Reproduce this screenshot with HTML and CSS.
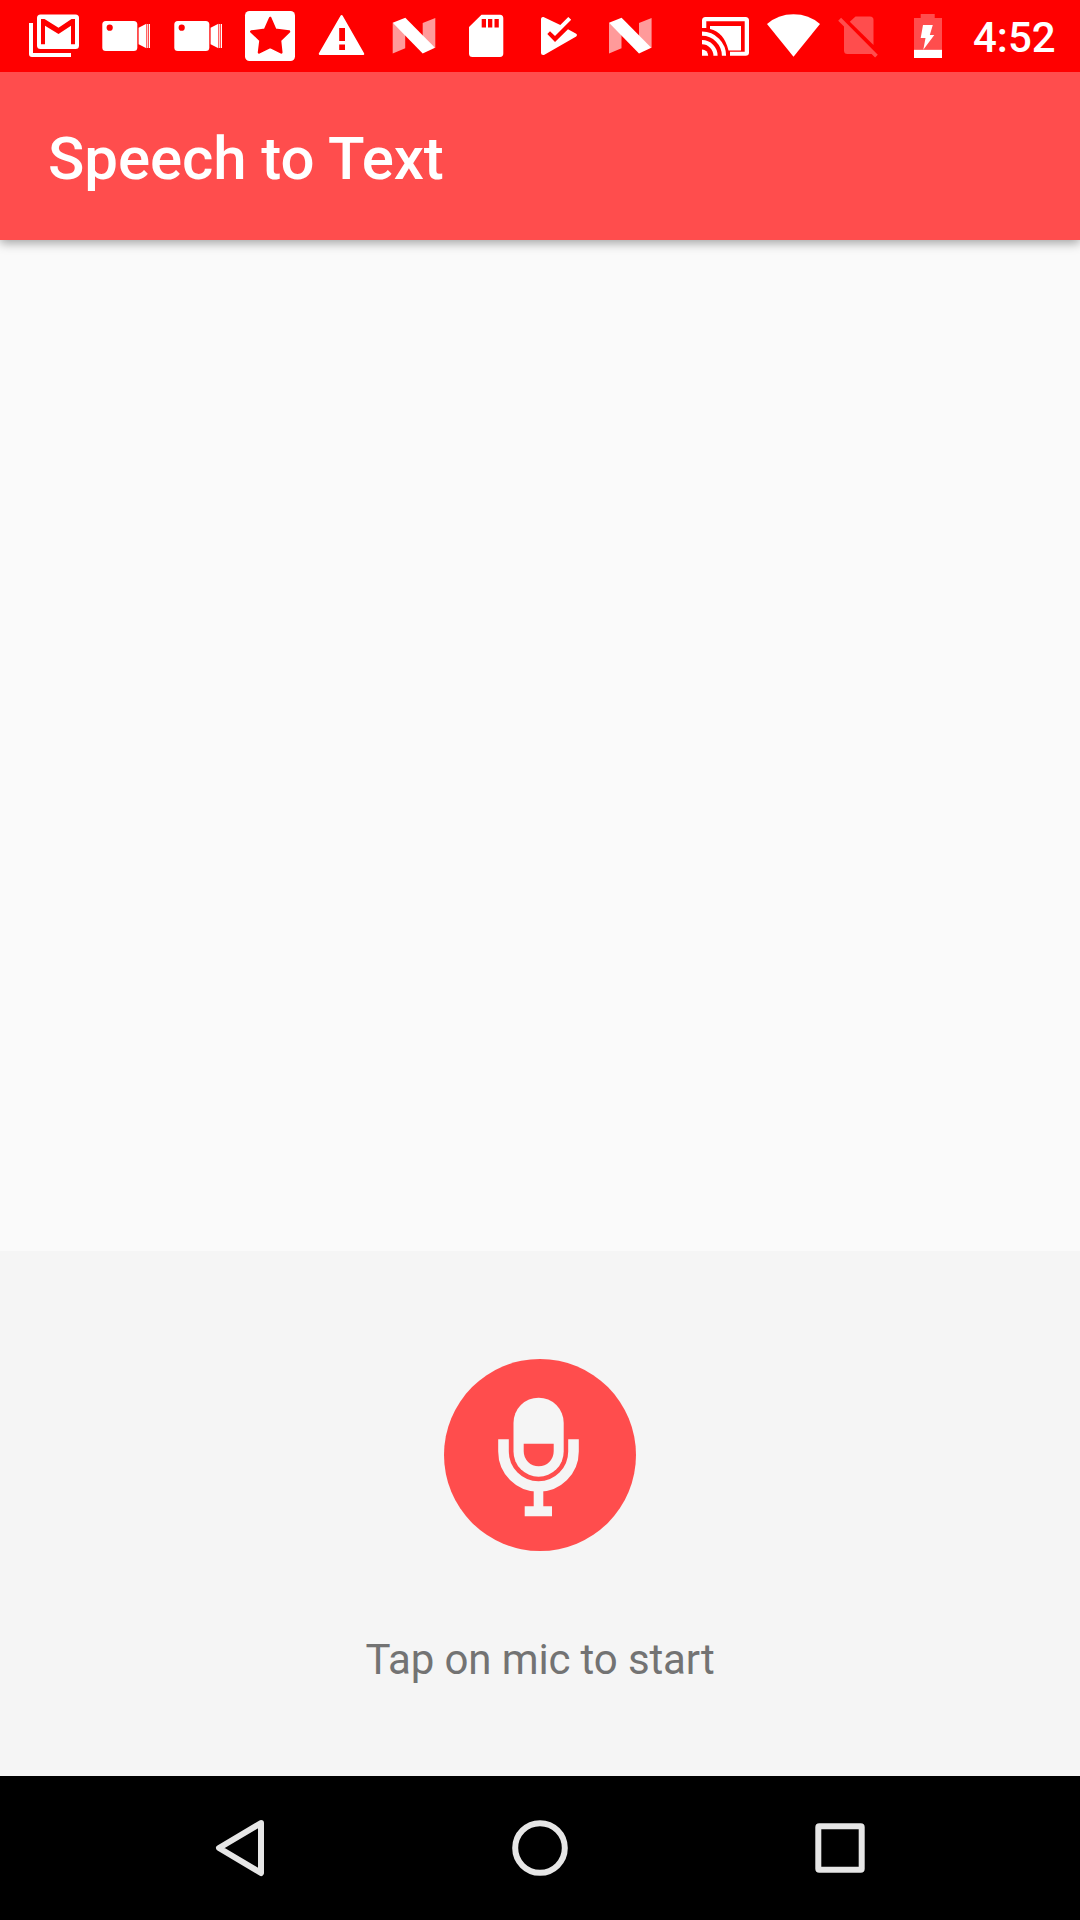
FILE: index.html
```html
<!DOCTYPE html>
<html lang="en">
<head>
<meta charset="utf-8">
<title>Speech to Text</title>
<link rel="stylesheet" href="styles.css">
</head>
<body>
<div class="screen">
  <div class="status-bar">
    <div class="notifications">
      <svg width="72" height="72" viewBox="0 0 72 72">
        <path d="M11 23h4v30h38v4H14a3 3 0 0 1-3-3z"/>
        <rect x="19" y="14.5" width="42" height="34.5" rx="3.5"/>
        <path class="cut" d="M23 19h3.5l14 8.7L53.5 19H57v25.3h-4V25.8L40.5 34 27 25.8v18.5h-4z"/>
      </svg>
      <svg width="72" height="72" viewBox="0 0 72 72">
        <rect x="12.3" y="21" width="35" height="30" rx="3.5"/>
        <circle class="cut" cx="19.7" cy="27.7" r="3.1"/>
        <path d="M48.6 27.7l7.8-4v24.6l-7.8-4.1zM57.2 24H60v24h-2.8z"/>
        <path class="cut" d="M58.2 24h.7v24h-.7z"/>
      </svg>
      <svg width="72" height="72" viewBox="0 0 72 72">
        <rect x="12.3" y="21" width="35" height="30" rx="3.5"/>
        <circle class="cut" cx="19.7" cy="27.7" r="3.1"/>
        <path d="M48.6 27.7l7.8-4v24.6l-7.8-4.1zM57.2 24H60v24h-2.8z"/>
        <path class="cut" d="M58.2 24h.7v24h-.7z"/>
      </svg>
      <svg width="72" height="72" viewBox="0 0 72 72">
        <rect x="11" y="11" width="50" height="50" rx="4.5"/>
        <path class="cut cut-round" d="M36.2 18L41.3 29.8 55 31.6 46 40.3 47.3 52.5 36.2 47 25 52.5 26.5 40.3 17.3 31.6 31 29.8z"/>
      </svg>
      <svg width="72" height="72" viewBox="0 0 72 72">
        <path class="round" d="M35.6 16.3L57 53.8H14z"/>
        <path class="cut" d="M33.2 28H39v13h-5.8zM33.2 44.5H39V50h-5.8z"/>
      </svg>
      <svg width="72" height="72" viewBox="0 0 72 72">
        <path class="soft" d="M14.7 22.7L27.2 30v18.2l-12.5 5.3zM44.7 23l12.6-5v30L44.7 40z"/>
        <path d="M14.7 22.7l12.6-4.9L57 47.7l-12.3 5.8z"/>
      </svg>
      <svg width="72" height="72" viewBox="0 0 72 72">
        <path d="M31.5 14.7H50a3.5 3.5 0 0 1 3.3 3.5V53.5A3.5 3.5 0 0 1 50 57H22.5a3.5 3.5 0 0 1-3.5-3.5V27z"/>
        <path class="cut" d="M31.7 19h4.3v8.5h-4.3zM38 19h4.3v8.5H38zM44.5 19h4.3v8.5h-4.3z"/>
      </svg>
      <svg width="72" height="72" viewBox="0 0 72 72">
        <path d="M21.5 17L38.3 25l8-8 2.9 2.7L33 36l-5-4.7-2.7 2.7 7.7 8 13-12.7 8.2 4.5q1.8 1.2 0 2.7L22 54.9q-3 .5-3-2V19q.3-2.5 2.5-2z"/>
      </svg>
      <svg width="72" height="72" viewBox="0 0 72 72">
        <path class="soft" d="M15 22.7L27.5 30v18.2L15 53.5zM45 23l12.6-5v30L45 40z"/>
        <path d="M15 22.7l12.6-4.9L57.3 47.7 45 53.5z"/>
      </svg>
    </div>
    <div class="system">
      <svg width="62" height="72" viewBox="696 0 62 72">
        <path d="M702 28v-7.500q0-3.500 3.500-3.500h40q3.500 0 3.500 3.500v32q0 3.200-3.500 3.200H730v-4h14.700V21.300H706.300V28z"/>
        <path d="M710 26h31v24.500h-12.500Q724 32 710 29z"/>
        <path class="wave" d="M702 33.700A22 22 0 0 1 724 55.700M702 42.200A13.500 13.500 0 0 1 715.500 55.700"/>
        <path d="M702 49.500a6.200 6.200 0 0 1 6.200 6.200H702z"/>
      </svg>
      <svg width="72" height="72" viewBox="758 0 72 72">
        <path d="M767 24Q778 14.200 793.500 14.200T820 24L793.500 56.700z"/>
      </svg>
      <svg class="dim" width="64" height="72" viewBox="830 0 64 72">
        <path d="M855.500 16.500H870q3.500 0 3.500 3.500v25L849.800 21.700z"/>
        <path d="M838.200 20.700l2.900-2.900 36.700 36.900-2.700 2.800-3.500-3.500H847.500q-3.500 0-3.500-3.500V26.500z"/>
      </svg>
      <svg width="68" height="72" viewBox="894 0 68 72">
        <path class="dim" d="M920.700 14h14v4H942v31.700h-28V18h6.700z"/>
        <path d="M914 49.700h28V58h-28zM923 25h9.800l-3 10h4.500L923.300 49.700l2.200-11.700h-4.800z"/>
      </svg>
      <span class="clock">4:52</span>
    </div>
  </div>

  <header class="toolbar"><h1 class="title">Speech to Text</h1></header>

  <main class="transcript"></main>

  <section class="recorder">
    <svg class="mic" width="192" height="192" viewBox="0 0 192 192">
      <circle class="mic-disc" cx="96" cy="96" r="96"/>
      <rect class="mic-shape" x="69.500" y="38.700" width="50.200" height="79" rx="25.100"/>
      <path class="mic-disc" d="M79.700 84.700h30v7.600a15 15 0 0 1-30 0z"/>
      <path class="mic-cradle" d="M59.500 80.300v12.200a35 35 0 0 0 70 0V80.300"/>
      <path class="mic-shape" d="M89.700 130h9.600v17.300H108v10H80.700v-10h9z"/>
    </svg>
    <p class="hint">Tap on mic to start</p>
  </section>

  <nav class="nav-bar">
    <svg width="60" height="60" viewBox="0 0 60 60"><path d="M51 33V5L9 30l42 25z"/></svg>
    <svg width="60" height="60" viewBox="0 0 60 60"><circle cx="30" cy="30" r="24.800"/></svg>
    <svg width="60" height="60" viewBox="0 0 60 60"><rect x="8.300" y="8.300" width="43.400" height="43.400" rx="1"/></svg>
  </nav>
</div>
</body>
</html>
```
FILE: styles.css
```css
* {
  box-sizing: border-box;
}

body {
  margin: 0;
  font-family: Roboto, sans-serif;
  background: #fafafa;
}

svg {
  display: block;
  flex: none;
}

.screen {
  width: 1080px;
  height: 1920px;
  display: flex;
  flex-direction: column;
  overflow: hidden;
}

.status-bar {
  position: relative;
  z-index: 1;
  height: 72px;
  flex: none;
  display: flex;
  gap: 30px;
  padding-left: 18px;
  background: #f00;
  fill: #fff;
}

.notifications,
.system {
  display: flex;
}

.cut {
  fill: #f00;
}

.cut-round {
  stroke: #f00;
  stroke-width: 2.5;
  stroke-linejoin: round;
}

.round {
  stroke: #fff;
  stroke-width: 2.5;
  stroke-linejoin: round;
}

.soft {
  fill: #ff9a9a;
}

.dim {
  fill: #ff4d4d;
}

.wave {
  fill: none;
  stroke: #fff;
  stroke-width: 4.2;
}

.clock {
  padding-left: 11px;
  font-size: 42px;
  font-weight: 500;
  line-height: 76px;
  color: #fff;
}

.toolbar {
  height: 168px;
  flex: none;
  display: flex;
  align-items: center;
  padding: 6px 48px 0;
  background: #ff4d4d;
  box-shadow: 0 3px 10px rgba(0, 0, 0, 0.36);
}

.title {
  margin: 0;
  font-size: 60px;
  font-weight: 500;
  line-height: 70px;
  letter-spacing: -0.08px;
  color: #fff;
}

.transcript {
  flex: 1;
}

.recorder {
  height: 525px;
  flex: none;
  display: flex;
  flex-direction: column;
  align-items: center;
  padding-top: 108px;
  background: #f5f5f5;
}

.mic-disc {
  fill: #ff4d4d;
}

.mic-shape {
  fill: #f5f5f5;
}

.mic-cradle {
  fill: none;
  stroke: #f5f5f5;
  stroke-width: 10.6;
}

.hint {
  margin: 84px 0 0;
  font-size: 42px;
  line-height: 50px;
  letter-spacing: -0.13px;
  color: #737373;
}

.nav-bar {
  height: 144px;
  flex: none;
  display: grid;
  grid-template-columns: repeat(3, 300px);
  justify-content: center;
  align-items: center;
  justify-items: center;
  background: #000;
  fill: none;
  stroke: #e6e6e6;
  stroke-width: 6;
  stroke-linejoin: round;
}
```
